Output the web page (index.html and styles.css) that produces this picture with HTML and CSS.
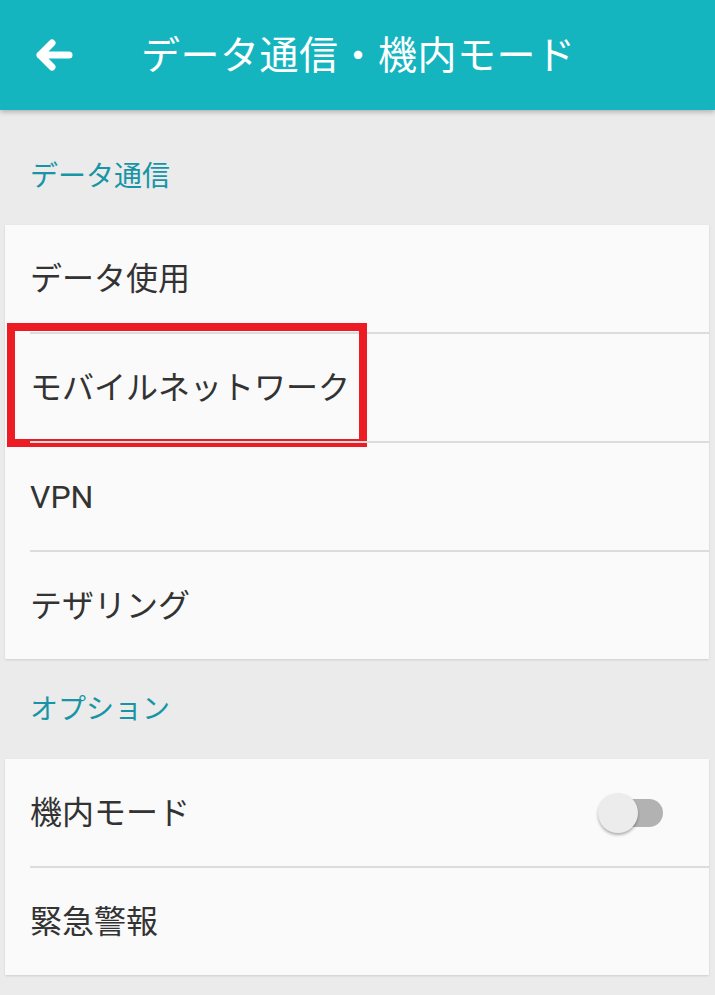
FILE: index.html
```html
<!DOCTYPE html>
<html lang="ja">
<head>
<meta charset="utf-8">
<link rel="stylesheet" href="styles.css">
</head>
<body>
<header class="appbar">
  <svg class="back" width="40" height="40" viewBox="0 0 40 40">
    <path d="M36 20H7 M19 8 L7 20 L19 32" fill="none" stroke="#fff" stroke-width="7" stroke-linecap="round" stroke-linejoin="round"/>
  </svg>
  <h1 class="title">データ通信・機内モード</h1>
</header>
<main>
  <div class="section-label first">データ通信</div>
  <div class="card">
    <div class="row"><span class="row-text">データ使用</span></div>
    <div class="row highlighted"><span class="row-text">モバイルネットワーク</span><div class="mark"></div></div>
    <div class="row"><span class="row-text">VPN</span></div>
    <div class="row"><span class="row-text">テザリング</span></div>
  </div>
  <div class="section-label">オプション</div>
  <div class="card">
    <div class="row"><span class="row-text">機内モード</span>
      <div class="switch"><div class="track"></div><div class="thumb"></div></div>
    </div>
    <div class="row"><span class="row-text">緊急警報</span></div>
  </div>
</main>
</body>
</html>
```
FILE: styles.css
```css
* { box-sizing: border-box; }
html, body { margin: 0; padding: 0; }
body {
  width: 715px;
  height: 995px;
  background: #ebebeb;
  font-family: Roboto, "Noto Sans CJK JP", sans-serif;
  overflow: hidden;
}
.appbar {
  height: 110px;
  background: #15b5c0;
  display: flex;
  align-items: center;
  box-shadow: 0 2px 5px rgba(0,0,0,0.25);
  position: relative;
  z-index: 2;
}
.back {
  margin-left: 33px;
  flex: none;
}
.title {
  margin: 3px 0 0 68px;
  color: #fff;
  font-weight: 400;
  font-size: 39px;
  line-height: 1;
  letter-spacing: 0.5px;
}
.section-label {
  color: #1795a6;
  font-size: 28px;
  line-height: 40px;
  padding: 31px 30px 29px;
}
.section-label.first {
  padding-top: 47px;
  padding-bottom: 28px;
}
.card {
  background: #fafafa;
  margin: 0 6px 0 5px;
  box-shadow: 0 1px 2px rgba(0,0,0,0.12);
}
.row {
  height: 107px;
  display: flex;
  align-items: center;
  padding-left: 25px;
  position: relative;
  color: #333;
  font-size: 32px;
}
.row + .row {
  border-top: 2px solid #dcdcdc;
  margin-left: 25px;
  padding-left: 0;
  height: 109px;
}
.row-text { line-height: 1; }
.mark {
  position: absolute;
  left: -23px;
  top: -11px;
  width: 360px;
  height: 124px;
  border: 8px solid #ed1c24;
}
.switch {
  position: relative;
  margin-left: auto;
  margin-right: 46px;
  width: 65px;
  height: 40px;
}
.track {
  position: absolute;
  right: 0;
  top: 6px;
  width: 62px;
  height: 28px;
  border-radius: 14px;
  background: #b2b2b2;
}
.thumb {
  position: absolute;
  left: 0;
  top: 0;
  width: 40px;
  height: 40px;
  border-radius: 50%;
  background: #ececec;
  box-shadow: 0 2px 3px rgba(0,0,0,0.3);
}
```
